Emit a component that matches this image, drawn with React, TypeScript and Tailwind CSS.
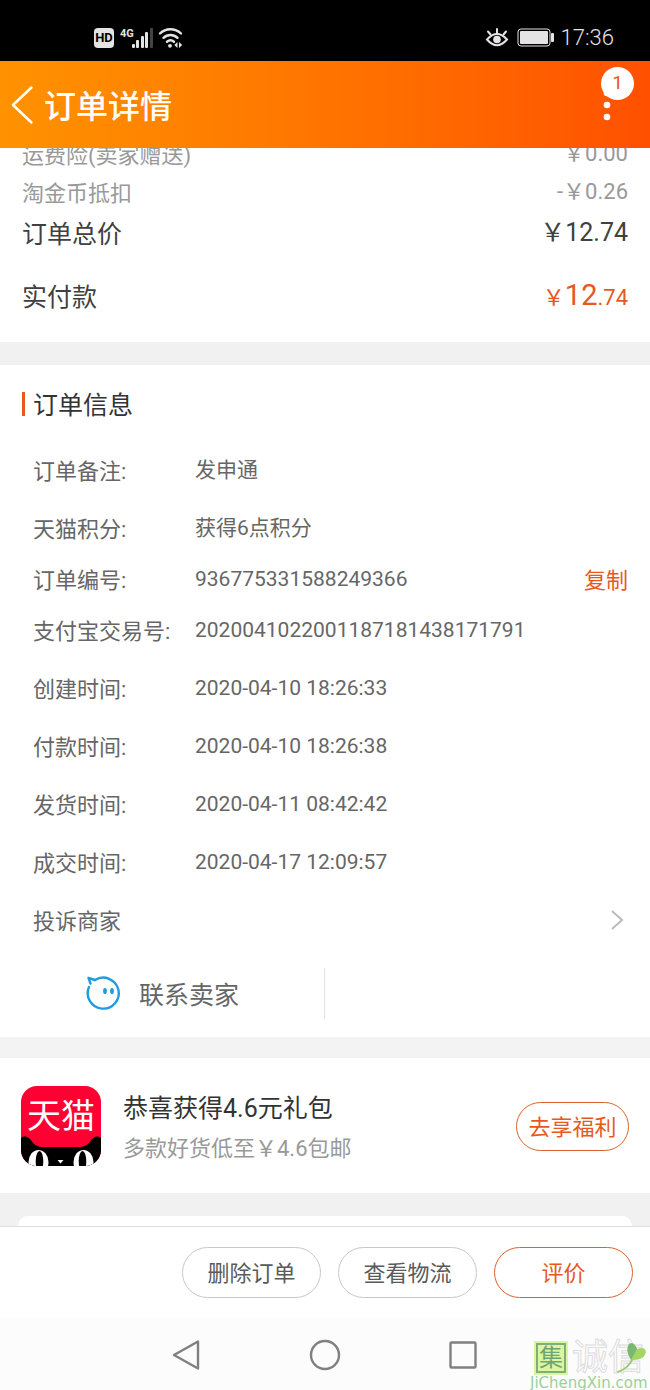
import type { ReactNode } from "react";

type InfoRow = {
  label: string;
  value: string;
  copyable?: boolean;
};

const infoRows: InfoRow[] = [
  { label: "订单备注:", value: "发申通" },
  { label: "天猫积分:", value: "获得6点积分" },
  { label: "订单编号:", value: "936775331588249366", copyable: true },
  { label: "支付宝交易号:", value: "2020041022001187181438171791" },
  { label: "创建时间:", value: "2020-04-10 18:26:33" },
  { label: "付款时间:", value: "2020-04-10 18:26:38" },
  { label: "发货时间:", value: "2020-04-11 08:42:42" },
  { label: "成交时间:", value: "2020-04-17 12:09:57" },
];

const StatusBar = () => (
  <div className="flex h-[61px] items-center justify-between bg-black pt-[14px] pr-9 pl-[94px] text-[#e4e4e4]">
    <div className="flex items-center">
      <div className="flex h-5 w-5 items-center justify-center rounded bg-[#e4e4e4] text-[13px] font-bold text-black">
        HD
      </div>
      <svg className="ml-1.5" width="34" height="22" viewBox="0 0 34 22" fill="currentColor">
        <text x="0" y="10" fontSize="11" fontWeight="700" fontFamily="Roboto">
          4G
        </text>
        <rect x="12" y="17" width="3" height="4" rx="1" />
        <rect x="16" y="13" width="3" height="8" rx="1" />
        <rect x="21" y="9" width="3" height="12" rx="1" />
        <rect x="25" y="5" width="3" height="16" rx="1" />
        <rect x="30" y="1" width="3" height="20" rx="1" fill="#444" />
      </svg>
      <svg className="ml-1" width="26" height="22" viewBox="0 0 26 22" fill="none" stroke="currentColor" strokeWidth="2.4" strokeLinecap="round">
        <path d="M2 6.5a15 15 0 0 1 21 0" />
        <path d="M5.5 10.8a10 10 0 0 1 14 0" />
        <path d="M9 14.8a5.5 5.5 0 0 1 7 0" />
        <circle cx="12" cy="18.8" r="1.9" fill="currentColor" stroke="none" />
        <path d="M19.5 15v6l-3.2-3zM21 15v6l3.2-3z" fill="currentColor" stroke="none" />
      </svg>
    </div>
    <div className="flex items-center">
      <svg width="24" height="22" viewBox="0 0 24 22" fill="none" stroke="currentColor" strokeWidth="2" strokeLinecap="round">
        <path d="M2 12.5Q12 1.5 22 12.5Q12 24 2 12.5Z" />
        <circle cx="12" cy="12.5" r="3.8" fill="currentColor" stroke="none" />
        <path d="M12 2v4M3 4.5l2.5 3M21 4.5l-2.5 3" />
      </svg>
      <svg className="ml-2" width="38" height="20" viewBox="0 0 38 20" fill="none">
        <rect x="1" y="1" width="32" height="17" rx="3" stroke="currentColor" />
        <rect x="3" y="3" width="28" height="13" rx="1" fill="currentColor" />
        <rect x="34" y="5" width="3" height="9" rx="1" fill="currentColor" />
      </svg>
      <span className="ml-1.5 text-[22px] leading-6 font-light">17:36</span>
    </div>
  </div>
);

const Header = () => (
  <header className="flex h-[87px] items-center justify-between bg-linear-to-r from-[#ff9200] to-[#ff5000] pr-4 pl-2.5 text-white">
    <div className="flex items-center gap-2.5">
      <button type="button" aria-label="返回">
        <svg width="24" height="40" viewBox="0 0 24 40" fill="none" stroke="currentColor" strokeWidth="2.5" strokeLinecap="round" strokeLinejoin="round">
          <path d="M21.5 2.5L3 20l18.5 17.5" />
        </svg>
      </button>
      <h1 className="pt-1 text-[32px] leading-10 font-medium">订单详情</h1>
    </div>
    <button type="button" aria-label="更多" className="relative flex h-[76px] w-[33px] flex-col items-start pt-6">
      <svg width="12" height="36" viewBox="0 0 12 36" fill="currentColor">
        <circle cx="6" cy="2" r="3.3" />
        <circle cx="6" cy="14" r="3.3" />
        <circle cx="6" cy="26" r="3.3" />
      </svg>
      <span className="absolute top-0 right-0 flex h-[33px] w-[33px] items-center justify-center rounded-full bg-white text-[19px] text-[#e8581c]">
        1
      </span>
    </button>
  </header>
);

const PriceSummary = () => (
  <section className="overflow-hidden px-[22px] pb-[25px] text-[#404040]">
    <dl>
      <div className="-mt-[13px] flex h-[38px] items-center justify-between text-[22px] text-[#999]">
        <dt className="pt-0.5">运费险(卖家赠送)</dt>
        <dd className="pb-0.5">￥0.00</dd>
      </div>
      <div className="flex h-[38px] items-center justify-between text-[22px] text-[#999]">
        <dt className="pt-0.5">淘金币抵扣</dt>
        <dd className="pb-0.5">-￥0.26</dd>
      </div>
      <div className="flex h-[43px] items-center justify-between text-[25px]">
        <dt className="pt-1">订单总价</dt>
        <dd>￥12.74</dd>
      </div>
      <div className="mt-5 flex h-[43px] items-center justify-between text-[25px]">
        <dt className="pt-1">实付款</dt>
        <dd className="text-[22px] text-[#e8581c]">
          ￥<span className="text-[29px]">12</span>.74
        </dd>
      </div>
    </dl>
  </section>
);

const OrderInfo = () => (
  <section className="text-[#666]">
    <h2 className="flex h-[77px] items-center gap-2 pl-[22px] text-[25px] text-[#333]">
      <span className="h-6 w-[3px] bg-[#e8581c]" />
      <span className="pt-1">订单信息</span>
    </h2>
    <dl className="pr-[22px] pl-[33px]">
      {infoRows.map((row) => (
        <div key={row.label} className={`flex items-center ${row.copyable ? "h-11" : "h-[58px]"}`}>
          <dt className="w-[162px] shrink-0 text-[22px]">{row.label}</dt>
          <dd className="flex flex-1 items-center justify-between text-[21px]">
            {row.value}
            {row.copyable && (
              <button type="button" className="text-[22px] text-[#e8581c]">
                复制
              </button>
            )}
          </dd>
        </div>
      ))}
    </dl>
    <button type="button" className="flex h-[58px] w-full items-center justify-between pr-[26px] pl-[33px] text-[22px]">
      投诉商家
      <svg width="14" height="22" viewBox="0 0 14 22" fill="none" stroke="#bbb" strokeWidth="2">
        <path d="M2 1l10 9-10 9" />
      </svg>
    </button>
    <div className="grid grid-cols-2 py-[18px]">
      <button type="button" className="flex h-[51px] items-center justify-center gap-[18px] border-r border-[#e2e2e2] text-[25px]">
        <svg width="36" height="36" viewBox="0 0 36 36" fill="none" stroke="#1f9ce0" strokeWidth="2.4" strokeLinecap="round" strokeLinejoin="round">
          <path d="M10 4A15.500 15.500 0 1 1 4 11" />
          <path d="M5.500 7.500L3.500 2L10 4" />
          <ellipse cx="20" cy="15" rx="1.9" ry="3.1" fill="#1f9ce0" stroke="none" />
          <ellipse cx="27" cy="15" rx="1.9" ry="3.1" fill="#1f9ce0" stroke="none" />
        </svg>
        <span className="pt-1">联系卖家</span>
      </button>
    </div>
  </section>
);

const TmallLogo = () => (
  <div className="relative h-20 w-20 shrink-0 overflow-hidden rounded-[16px] bg-[#ff0033]">
    <svg className="absolute bottom-0 left-0" width="80" height="32" viewBox="0 0 80 32">
      <path d="M0 32V4Q4 0 9 5Q14 13 21 13H59Q66 13 71 5Q76 0 80 4V32Z" fill="#000" />
      <ellipse cx="17.5" cy="28" rx="10" ry="12" fill="#fff" />
      <ellipse cx="62.5" cy="28" rx="10" ry="12" fill="#fff" />
      <ellipse cx="18.5" cy="27" rx="3.8" ry="10" fill="#000" />
      <ellipse cx="61.5" cy="27" rx="3.8" ry="10" fill="#000" />
      <path d="M36.5 26h6l-3 3.5z" fill="#fff" />
    </svg>
    <span className="absolute inset-x-0 top-2.5 text-center text-[34px] leading-10 text-white">天猫</span>
  </div>
);

const Promo = () => (
  <section className="flex items-center px-[21px] pt-[26px] pb-[25px]">
    <TmallLogo />
    <div className="ml-[22px] flex-1 pt-1">
      <p className="text-[25px] leading-[42px] text-[#333]">恭喜获得4.6元礼包</p>
      <p className="text-[22px] leading-[38px] text-[#999]">多款好货低至￥4.6包邮</p>
    </div>
    <button type="button" className="h-[49px] w-[113px] rounded-full border border-[#d9622f] pt-0.5 text-[22px] text-[#e8581c]">
      去享福利
    </button>
  </section>
);

const ActionButton = ({ children, primary }: { children: ReactNode; primary?: boolean }) => (
  <button
    type="button"
    className={`h-[51px] w-[139px] rounded-full border pt-0.5 text-[22px] ${
      primary ? "border-[#d9622f] text-[#e8581c]" : "border-[#c8c8c8] text-[#5a5a5a]"
    }`}
  >
    {children}
  </button>
);

const Watermark = () => (
  <div className="absolute right-0 bottom-0 flex w-[120px] flex-col">
    <div className="flex items-center">
      <span className="ml-1 flex h-[34px] w-[34px] shrink-0 items-center justify-center bg-[#dcf5a0] p-0.5">
        <span className="flex h-full w-full items-center justify-center border-2 border-[#7fae78] text-[24px] leading-none text-[#6fa573]">
          集
        </span>
      </span>
      <span className="ml-1 shrink-0 text-[36px] leading-9 text-[#fcfcfc] [-webkit-text-stroke:1px_#dcdcdc]">诚信</span>
      <svg className="absolute top-0 right-0" width="40" height="34" viewBox="0 0 40 34">
        <path d="M8 32Q19 28 23 18" fill="none" stroke="#9cca72" strokeWidth="2" strokeLinecap="round" />
        <path d="M21 20Q15 10 19 4Q24 1 27 9Q35 6 36 12Q34 21 21 20Z" fill="#a5d665" />
        <path d="M21 20Q15 10 19 4Q24 1 27 9Z" fill="#79b873" />
      </svg>
    </div>
    <span className="font-['DejaVu_Sans',sans-serif] text-[15px] leading-[14px] text-[#9fcf9a]">JiChengXin.com</span>
  </div>
);

const SystemNav = () => (
  <nav className="relative flex h-[72px] items-center justify-center gap-[107px] bg-[#fcfcfc] pt-0.5 text-[#808080]">
    <button type="button" aria-label="后退">
      <svg width="30" height="34" viewBox="0 0 30 34" fill="none" stroke="currentColor" strokeWidth="2.4" strokeLinejoin="round">
        <path d="M26 3.5v27L2 17z" />
      </svg>
    </button>
    <button type="button" aria-label="主页">
      <svg width="32" height="32" viewBox="0 0 32 32" fill="none" stroke="currentColor" strokeWidth="2.4">
        <circle cx="16" cy="16" r="14" />
      </svg>
    </button>
    <button type="button" aria-label="最近任务">
      <svg width="30" height="30" viewBox="0 0 30 30" fill="none" stroke="currentColor" strokeWidth="2.4">
        <rect x="2.5" y="2.5" width="25" height="25" rx="1" />
      </svg>
    </button>
    <Watermark />
  </nav>
);

const App = () => {
  return (
    <div className="flex min-h-screen flex-col bg-white font-[Roboto,'Noto_Sans_CJK_SC',sans-serif]">
      <StatusBar />
      <Header />
      <main className="flex-1">
        <PriceSummary />
        <div className="h-[23px] bg-[#f1f1f1]" />
        <OrderInfo />
        <div className="h-[21px] bg-[#f3f3f3]" />
        <Promo />
        <div className="bg-[#f1f1f1] px-[18px] pt-[23px]">
          <div className="h-2.5 rounded-t-[12px] bg-white" />
        </div>
      </main>
      <footer>
        <div className="flex items-center justify-end gap-[17px] border-t border-[#dedede] px-[17px] py-5">
          <ActionButton>删除订单</ActionButton>
          <ActionButton>查看物流</ActionButton>
          <ActionButton primary>评价</ActionButton>
        </div>
        <SystemNav />
      </footer>
    </div>
  );
};

export default App;
